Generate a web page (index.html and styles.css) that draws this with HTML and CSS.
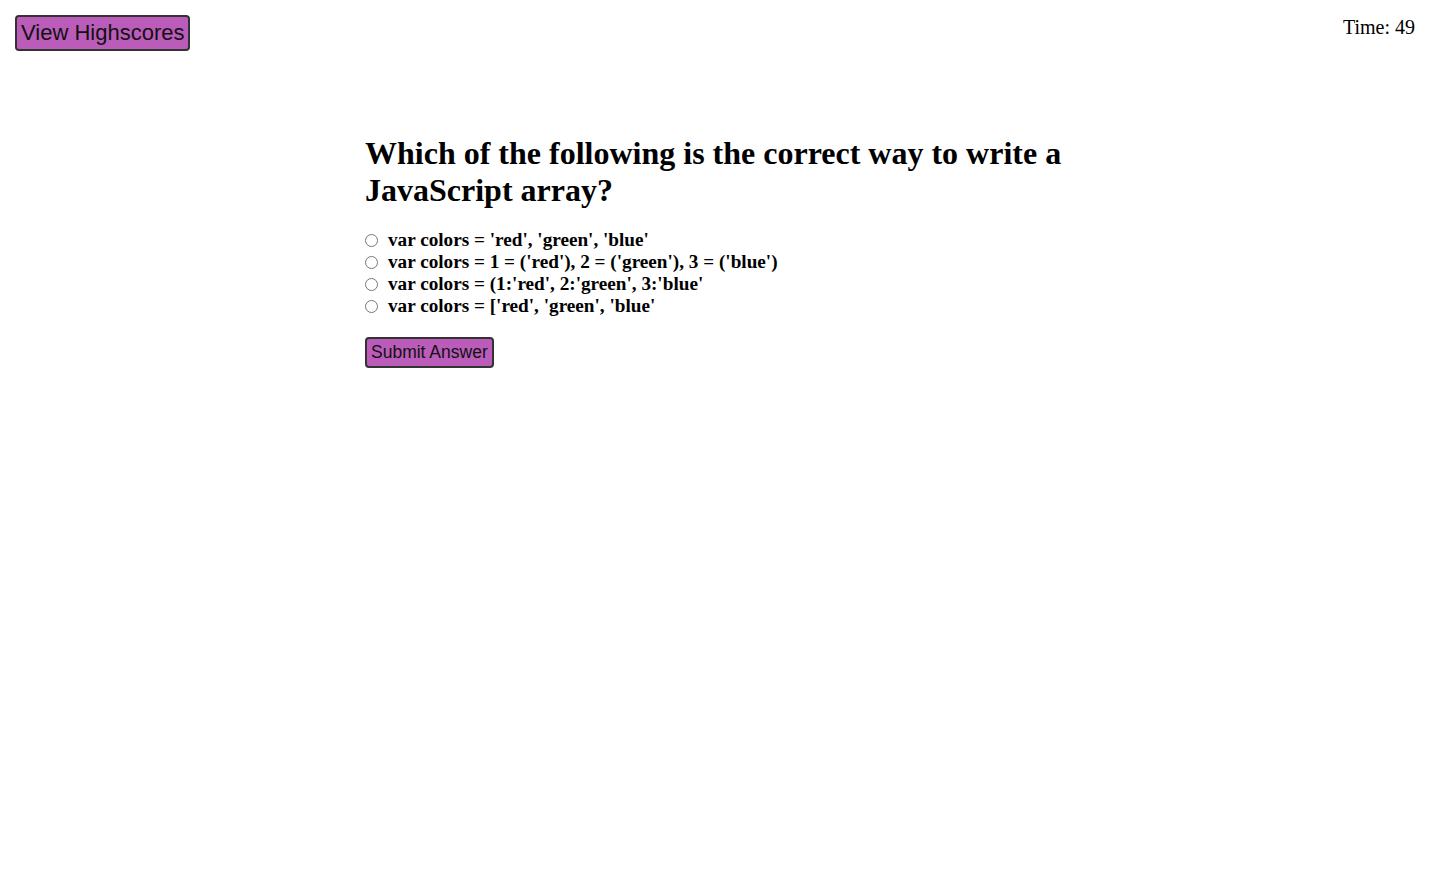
FILE: index.html
```html
<!DOCTYPE html>
<html>
<head>
<meta charset="utf-8">
<link rel="stylesheet" href="styles.css">
</head>
<body>
<header class="top">
  <button class="btn btn-large">View Highscores</button>
  <div class="timer">Time: 49</div>
</header>
<main class="quiz">
  <h2 class="question">Which of the following is the correct way to write a JavaScript array?</h2>
  <form class="answers">
    <label class="option"><input type="radio" name="a"> var colors = 'red', 'green', 'blue'</label>
    <label class="option"><input type="radio" name="a"> var colors = 1 = ('red'), 2 = ('green'), 3 = ('blue')</label>
    <label class="option"><input type="radio" name="a"> var colors = (1:'red', 2:'green', 3:'blue'</label>
    <label class="option"><input type="radio" name="a"> var colors = ['red', 'green', 'blue'</label>
  </form>
  <button class="btn btn-small">Submit Answer</button>
</main>
</body>
</html>
```

FILE: styles.css
```css
html, body {
  margin: 0;
  padding: 0;
  background: #fff;
  font-family: "Liberation Serif", "Times New Roman", serif;
  color: #000;
}
.top {
  display: flex;
  justify-content: space-between;
  align-items: flex-start;
  padding: 15px 15px 0 15px;
}
.btn {
  font-family: "Liberation Sans", Arial, sans-serif;
  background: #bb5cba;
  color: #111;
  border: 2px solid #333;
  border-radius: 4px;
  padding: 0 4px;
  cursor: pointer;
}
.btn-large {
  font-size: 22px;
  height: 36px;
  line-height: 29px;
  padding-bottom: 2px;
}
.btn-small {
  font-size: 17.5px;
  height: 31px;
  line-height: 25px;
  padding-bottom: 1px;
}
.timer {
  font-size: 20px;
  padding-top: 1px;
}
.quiz {
  width: 700px;
  margin: 84px auto 0;
}
.question {
  font-size: 32px;
  line-height: 37px;
  margin: 0 0 20px 0;
  font-weight: bold;
}
.answers {
  display: flex;
  flex-direction: column;
  margin: 0 0 20px 0;
}
.option {
  font-size: 19.2px;
  font-weight: bold;
  line-height: 22px;
  display: flex;
  align-items: center;
  gap: 10px;
}
.option input {
  margin: 0;
  width: 13px;
  height: 13px;
}
```
